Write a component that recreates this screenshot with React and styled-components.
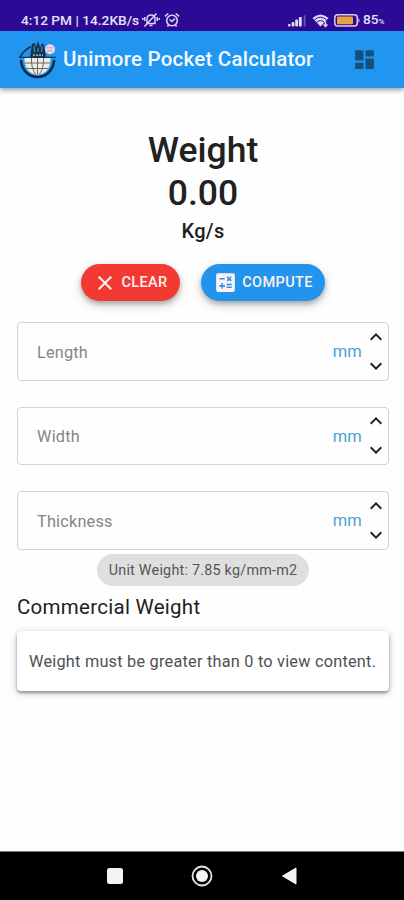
import React from 'react'
import styled, { createGlobalStyle } from 'styled-components'
import { MdCalculate, MdClose, MdDashboard, MdKeyboardArrowUp, MdKeyboardArrowDown } from 'react-icons/md'

const fields = ['Length', 'Width', 'Thickness']

const Logo = () => (
  <svg width="40" height="40" viewBox="0 0 40 40">
    <path d="M2 17 Q6 10 13 6.500" stroke="#17324a" strokeWidth="1.500" fill="none" />
    <path d="M1 17.300 H38" stroke="#17324a" strokeWidth="1.200" />
    <path d="M2.800 20 C4 31 11 37 19.500 37 S35 31 36.200 20" stroke="#14283b" strokeWidth="2.400" fill="none" />
    <path d="M12 17 L14 4 L16.500 3 L18 7 L20 1 L22 7 L24.500 3 L26 5 L28 17 Z" fill="#17324a" />
    <path d="M16 6 L16.500 12 M24 6 L23.500 12 M20 8 V12" stroke="#2d8ecd" strokeWidth="1.300" />
    <path d="M6.500 18 H32.500 C33 28 27.500 34.500 19.500 34.500 S6 28 6.500 18 Z" fill="#ecece8" />
    <path d="M7 23 H32 M9 28.500 H30 M13.500 18 Q13 28 17.500 34 M25.500 18 Q26 28 21.500 34 M19.500 18 V34" stroke="#5f5b55" strokeWidth="0.900" fill="none" />
    <path d="M14 13.500 H26 V17 H14 Z" fill="#20313f" />
    <path d="M15 15.200 H25" stroke="#b6d6e6" strokeWidth="1.300" strokeDasharray="2 1" />
    <circle cx="32" cy="9.300" r="5" fill="#e6dbe6" />
    <path d="M29 7.800 H35 M29 10.800 H35" stroke="#c88eaa" strokeWidth="0.800" />
  </svg>
)

const MutedBell = () => (
  <svg width="18" height="16" viewBox="0 0 18 16" fill="none" stroke="#ded4f3" strokeWidth="1.500">
    <path d="M5 11.500 V7 Q5 3 9 3 Q13 3 13 7 V11.500 Z M7.500 13.500 H10.500" />
    <path d="M2.500 14.500 L14.500 1.500 M2.800 5 V9 M0.800 6 V8 M15.200 5 V9 M17.200 6 V8" />
  </svg>
)

const Alarm = () => (
  <svg width="16" height="16" viewBox="0 0 16 16" fill="none" stroke="#ded4f3" strokeWidth="1.600">
    <circle cx="8" cy="8.500" r="5.300" />
    <path d="M1 4.300 L4.300 1.500 M15 4.300 L11.700 1.500 M5.500 7.500 L8 9.500 L11 6.500 M3.500 14.500 L4.500 13 M12.500 14.500 L11.500 13" />
  </svg>
)

const Signal = () => (
  <svg width="19" height="13" viewBox="0 0 19 13" fill="#e2daf2">
    <rect x="0" y="10" width="2.600" height="2.500" rx="1" />
    <rect x="3.600" y="8" width="2.800" height="4.500" rx="1" />
    <rect x="7.200" y="5.500" width="2.800" height="7" rx="1" />
    <rect x="10.800" y="3" width="3" height="9.500" rx="1" />
    <rect x="15.700" y="1" width="1.800" height="11.500" rx="0.900" opacity="0.35" />
  </svg>
)

const Wifi = () => (
  <svg width="17" height="15" viewBox="0 0 17 15">
    <path d="M0.500 5 Q8.500 -2 16.500 5 L8.500 13.500 Z" fill="#e2daf2" />
    <path d="M2.500 6.800 Q8.500 1.500 14.500 6.800 M4.800 9.200 Q8.500 6 12.200 9.200" fill="none" stroke="#2d0a96" strokeWidth="1" />
    <path d="M13.500 8.500 V12 M11.500 11.500 L13.500 13.500 L15.500 11.500" fill="none" stroke="#e2daf2" strokeWidth="1.400" />
  </svg>
)

const Battery = () => (
  <svg width="27" height="13" viewBox="0 0 27 13">
    <rect x="0.800" y="0.800" width="22.500" height="11.200" rx="3" fill="none" stroke="#dcd0ec" strokeWidth="1.500" />
    <rect x="3" y="2.500" width="16" height="7.800" rx="1" fill="#eaa33c" />
    <path d="M24.500 4 Q26.800 6.400 24.500 8.800 Z" fill="#dcd0ec" />
  </svg>
)

class App extends React.Component {
  render() {
    return (
      <Screen>
        <GlobalStyle />
        <StatusBar>
          <StatusGroup>
            <StatusText>4:12 PM | 14.2KB/s</StatusText>
            <MutedBell />
            <Alarm />
          </StatusGroup>
          <StatusGroup $gap="5px">
            <Signal />
            <Wifi />
            <Battery />
            <Percent>85<small>%</small></Percent>
          </StatusGroup>
        </StatusBar>
        <AppBar>
          <Logo />
          <AppTitle>Unimore Pocket Calculator</AppTitle>
          <MenuButton><MdDashboard size={25} /></MenuButton>
        </AppBar>
        <Content>
          <Result>
            <ResultTitle>Weight</ResultTitle>
            <ResultValue>0.00</ResultValue>
            <ResultUnit>Kg/s</ResultUnit>
          </Result>
          <Actions>
            <ActionButton $color="#f23a33" $width="99px">
              <MdClose size={24} />
              <span>CLEAR</span>
            </ActionButton>
            <ActionButton $color="#2294ee" $width="124px">
              <MdCalculate size={25} />
              <span>COMPUTE</span>
            </ActionButton>
          </Actions>
          <FieldList>
            {fields.map((label) => (
              <Field key={label}>
                <FieldLabel>{label}</FieldLabel>
                <FieldUnit>mm</FieldUnit>
                <Stepper>
                  <MdKeyboardArrowUp size={24} />
                  <MdKeyboardArrowDown size={24} />
                </Stepper>
              </Field>
            ))}
          </FieldList>
          <Chip>Unit Weight: 7.85 kg/mm-m2</Chip>
          <SectionTitle>Commercial Weight</SectionTitle>
          <Card>Weight must be greater than 0 to view content.</Card>
        </Content>
        <NavBar>
          <svg width="16" height="16"><rect width="16" height="16" rx="2.500" fill="#f4f4f4" /></svg>
          <svg width="22" height="22" viewBox="0 0 22 22">
            <circle cx="11" cy="11" r="9.500" fill="none" stroke="#e4e4e4" strokeWidth="1.800" />
            <circle cx="11" cy="11" r="6" fill="#f4f4f4" />
          </svg>
          <svg width="16" height="18" viewBox="0 0 16 18"><path d="M1.500 9 L15 1 V17 Z" fill="#f4f4f4" stroke="#f4f4f4" strokeLinejoin="round" /></svg>
        </NavBar>
      </Screen>
    )
  }
}

const GlobalStyle = createGlobalStyle`
  * { box-sizing: border-box; }
  body { margin: 0; background: #fefefe; }
  svg { display: block; flex-shrink: 0; }
`

const Screen = styled.div`
  display: flex;
  flex-direction: column;
  width: 404px;
  height: 900px;
  overflow: hidden;
  background: #fefefe;
  color: #212121;
  font-family: Roboto, sans-serif;
`

const StatusBar = styled.div`
  display: flex;
  justify-content: space-between;
  align-items: center;
  height: 31px;
  padding: 9px 19px 0 21px;
  background: #2d0a96;
`

const StatusGroup = styled.div`
  display: flex;
  align-items: center;
  gap: ${props => props.$gap || '4px'};
`

const StatusText = styled.span`
  width: 117px;
  white-space: nowrap;
  color: #e8e0f8;
  font-size: 13.700px;
  line-height: 16px;
  font-weight: 500;
`

const Percent = styled(StatusText)`
  width: 22px;
  margin-left: -3px;
  letter-spacing: 0;

  small {
    font-size: 8px;
    letter-spacing: 0;
  }
`

const AppBar = styled.header`
  display: flex;
  align-items: center;
  height: 57px;
  padding: 0 27px 0 18px;
  background: #2196f0;
  box-shadow: 0 2px 5px rgba(0, 0, 0, 0.4);
`

const AppTitle = styled.div`
  flex: 1;
  margin-left: 5px;
  padding-bottom: 1px;
  color: #f0f9ff;
  font-size: 20.500px;
  font-weight: 500;
  letter-spacing: 0.23px;
  white-space: nowrap;
`

const MenuButton = styled.div`
  color: #174f7c;
`

const Content = styled.main`
  display: flex;
  flex: 1;
  flex-direction: column;
  padding: 41px 15px 0 17px;
`

const Result = styled.div`
  text-align: center;
  font-weight: 500;
`

const ResultTitle = styled.div`
  font-size: 35.500px;
  line-height: 43px;
`

const ResultValue = styled(ResultTitle)`
`

const ResultUnit = styled.div`
  font-size: 20px;
  line-height: 33px;
  letter-spacing: 0.3px;
`

const Actions = styled.div`
  display: flex;
  justify-content: center;
  gap: 21px;
  margin-top: 16px;
`

const ActionButton = styled.div`
  display: flex;
  align-items: center;
  justify-content: center;
  gap: 4px;
  width: ${props => props.$width};
  height: 37px;
  border-radius: 19px;
  background: ${props => props.$color};
  box-shadow: 0 3px 5px rgba(0, 0, 0, 0.25), 0 4px 12px rgba(0, 0, 0, 0.15);
  color: #fff1f1;
  font-size: 14.500px;
  font-weight: 500;
  letter-spacing: 0.4px;
`

const FieldList = styled.div`
  display: grid;
  gap: 26px;
  margin-top: 21px;
`

const Field = styled.div`
  display: flex;
  align-items: center;
  height: 58.500px;
  padding: 0 0 0 19px;
  border: 1px solid #d2d2d2;
  border-radius: 4px;
`

const FieldLabel = styled.div`
  flex: 1;
  padding-top: 2px;
  color: #858585;
  font-size: 16.300px;
  letter-spacing: 0.2px;
`

const FieldUnit = styled.div`
  padding-top: 1px;
  color: #4a9fd6;
  font-size: 16.500px;
  letter-spacing: 0.2px;
`

const Stepper = styled.div`
  display: flex;
  flex-direction: column;
  gap: 5px;
  margin-left: 2px;
  color: #222;
`

const Chip = styled.div`
  align-self: center;
  width: 212px;
  height: 32px;
  margin-top: 4px;
  border-radius: 16px;
  background: #dfdfdf;
  color: #555;
  font-size: 14.300px;
  line-height: 32px;
  text-align: center;
  letter-spacing: 0.25px;
  white-space: nowrap;
`

const SectionTitle = styled.div`
  margin-top: 5px;
  font-size: 20.500px;
  line-height: 32px;
  letter-spacing: 0.27px;
`

const Card = styled.div`
  height: 60px;
  margin-top: 8px;
  padding-left: 12px;
  border-radius: 4px;
  background: #fff;
  box-shadow: 0 2px 3px rgba(0, 0, 0, 0.35), 0 2px 9px rgba(0, 0, 0, 0.2);
  color: #505050;
  font-size: 16.300px;
  line-height: 61px;
  letter-spacing: 0.23px;
  white-space: nowrap;
`

const NavBar = styled.div`
  display: flex;
  justify-content: space-between;
  align-items: center;
  height: 49px;
  padding: 0 107px;
  border-top: 1px solid #777;
  background: #000;
`

export default App
